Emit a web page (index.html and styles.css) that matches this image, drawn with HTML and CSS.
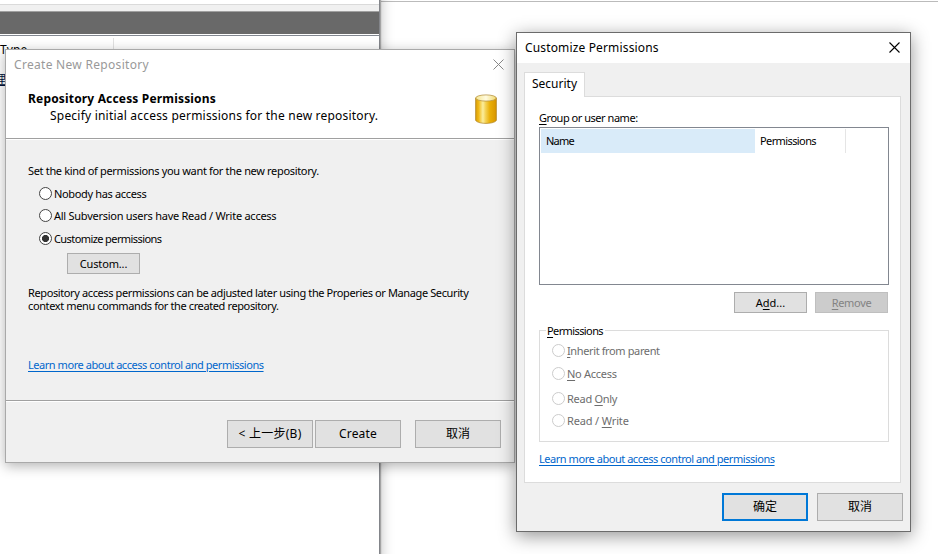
FILE: index.html
```html
<!DOCTYPE html>
<html lang="zh-CN">
<head>
<meta charset="utf-8">
<title>Customize Permissions</title>
<link rel="stylesheet" href="styles.css">
</head>
<body>
<div class="desktop">
  <div class="edge-line"></div>
  <section class="window console">
    <div class="console-bar"></div>
    <div class="console-caption"></div>
    <div class="console-head"><span class="col-type">Type</span></div>
    <div class="console-row">理</div>
  </section>

  <section class="window wizard">
    <header class="wizard-head">
      <div class="titlebar">
        <span class="title t-wizard">Create New Repository</span>
        <svg class="close" viewBox="0 0 11 11"><path d="M.5.5l10 10M10.5.5l-10 10"/></svg>
      </div>
      <div class="heading">
        <div>
          <h1>Repository Access Permissions</h1>
          <p class="sub">Specify initial access permissions for the new repository.</p>
        </div>
        <svg class="db" viewBox="0 0 22 30">
          <defs>
            <linearGradient id="side"><stop offset="0" stop-color="#d69c08"/><stop offset=".14" stop-color="#f0b816"/><stop offset=".35" stop-color="#fbee9d"/><stop offset=".48" stop-color="#f4d256"/><stop offset=".68" stop-color="#eab008"/><stop offset="1" stop-color="#d79500"/></linearGradient>
            <linearGradient id="lid"><stop offset="0" stop-color="#f7e68f"/><stop offset=".5" stop-color="#fffbe0"/><stop offset="1" stop-color="#f2d96c"/></linearGradient>
          </defs>
          <path d="M.6 4v22c0 1.8 4.6 3.4 10.4 3.4S21.400 27.800 21.400 26V4z" fill="url(#side)" stroke="#ae8120" stroke-width=".7"/>
          <ellipse cx="11" cy="4" rx="10.300" ry="3.100" fill="url(#lid)" stroke="#b99545" stroke-width=".8"/>
        </svg>
      </div>
    </header>
    <main class="wizard-body">
      <p class="lead w1">Set the kind of permissions you want for the new repository.</p>
      <div class="radio r1"><i></i><span class="w2">Nobody has access</span></div>
      <div class="radio r2"><i></i><span class="w3">All Subversion users have Read / Write access</span></div>
      <div class="radio r3 on"><i></i><span class="w4">Customize permissions</span></div>
      <button class="btn small custom"><span class="w5">Custom...</span></button>
      <p class="note">Repository access permissions can be adjusted later using the Properies or Manage Security<br>context menu commands for the created repository.</p>
      <a class="link">Learn more about access control and permissions</a>
    </main>
    <footer class="wizard-foot">
      <button class="btn"><span class="w8">&lt; 上一步(B)</span></button>
      <button class="btn"><span class="w9">Create</span></button>
      <button class="btn apart">取消</button>
    </footer>
  </section>

  <section class="window dialog">
    <div class="titlebar">
      <span class="title t-dialog">Customize Permissions</span>
      <svg class="close" viewBox="0 0 11 11"><path d="M.5.5l10 10M10.5.5l-10 10"/></svg>
    </div>
    <div class="tabs"><div class="tab"><span>Security</span></div></div>
    <div class="pane">
      <div class="label w11"><u>G</u>roup or user name:</div>
      <div class="list"><div class="list-head"><div class="c-name"><span class="w12">Name</span></div><div class="c-perm"><span class="w13">Permissions</span></div></div></div>
      <div class="actions">
        <button class="btn small"><span>A<u>d</u>d...</span></button>
        <button class="btn small off"><span class="w15"><u>R</u>emove</span></button>
      </div>
      <div class="group">
        <div class="legend"><span class="w13"><u>P</u>ermissions</span></div>
        <div class="radio g1"><i></i><span class="w17"><u>I</u>nherit from parent</span></div>
        <div class="radio g2"><i></i><span class="w18"><u>N</u>o Access</span></div>
        <div class="radio g3"><i></i><span class="w18">Read <u>O</u>nly</span></div>
        <div class="radio g4"><i></i><span class="w20">Read / <u>W</u>rite</span></div>
      </div>
      <a class="link">Learn more about access control and permissions</a>
    </div>
    <div class="dialog-foot">
      <button class="btn primary">确定</button>
      <button class="btn">取消</button>
    </div>
  </section>
</div>
</body>
</html>
```
FILE: styles.css
```css
* { box-sizing: border-box; }
body { margin: 0; background: #fff; font: 11px/13px "Noto Sans", "Noto Sans CJK SC", sans-serif; color: #000; }
h1, p { margin: 0; font-weight: normal; }
span, a, p, .label { white-space: nowrap; }
u { text-underline-offset: 2px; text-decoration-thickness: 1px; }

.desktop { position: relative; width: 938px; height: 554px; overflow: hidden; background: #fff; }
.window { position: absolute; }
.edge-line { margin-left: 381px; height: 2px; border-bottom: 1px solid #bbb; }

.console { left: 0; top: -10px; width: 380px; height: 584px; padding-top: 10px; background: #fff; border-right: 1px solid #83858a; box-shadow: 1px 0 1px rgba(0,0,0,.25), 0 0 13px rgba(0,0,0,.3); }
.console-bar { height: 11px; margin-top: 0; background: linear-gradient(#fff 4px, #dadada 4px 5px, #f0f0f0 5px); }
.console-caption { height: 23px; background: #696969; border-top: 1px solid #a0a0a0; }
.console-head { height: 27px; margin-top: 1px; border-top: 1px solid #828790; padding-top: 2px; display: flex; }
.col-type { width: 114px; border-right: 1px solid #e2e2e2; font-size: 12px; line-height: 23px; letter-spacing: .2px; }
.console-row { margin: 11px 0 0 -6px; height: 16px; font-size: 12px; line-height: 13px; color: #00133a; text-decoration: underline; }

.wizard { left: 5px; top: 49px; width: 510px; height: 414px; border: 1px solid #a9a9a9; background: #f0f0f0; display: flex; flex-direction: column; box-shadow: 0 3px 12px rgba(0,0,0,.3); }
.wizard-head { height: 89px; background: #fff; border-bottom: 1px solid #a0a0a0; box-shadow: 0 1px #fff; }
.titlebar { display: flex; justify-content: space-between; align-items: center; height: 30px; padding: 0 10px 0 8px; }
.title { font-size: 12px; line-height: 16px; }
.wizard .title { color: #999; }
.close { width: 11px; height: 11px; margin-top: -2px; fill: none; stroke: #000; stroke-width: 1.1; }
.wizard .close { stroke: #888; stroke-width: 1; }
.heading { display: flex; justify-content: space-between; padding: 10px 17px 0 22px; }
.heading h1 { font-size: 12px; line-height: 17px; font-weight: bold; }
.sub { font-size: 12px; line-height: 17px; margin-left: 22px; }
.db { width: 22px; height: 30px; margin-top: 4px; }
.wizard-body { height: 262px; padding: 25px 22px 0; border-bottom: 1px solid #a0a0a0; box-shadow: 0 1px #fff; }
.wizard-foot { display: flex; justify-content: flex-end; gap: 2px; padding: 19px 13px 0; }
.apart { margin-left: 12px; }

.radio { display: flex; align-items: center; gap: 2px; height: 14px; margin-left: 11px; }
.radio i { width: 13px; height: 13px; border: 1px solid #444; border-radius: 50%; background: #fff; }
.radio.on i { background: radial-gradient(circle, #333 3.2px, #fff 3.9px); }
.r1 { margin-top: 9px; } .r2 { margin-top: 8px; } .r3 { margin-top: 9px; }

.btn { display: flex; align-items: center; justify-content: center; width: 86px; height: 28px; padding: 0; border: 1px solid #adadad; background: #e1e1e1; color: #000; font: 12px/16px "Noto Sans", "Noto Sans CJK SC", sans-serif; }
.btn.small { width: 73px; height: 21px; font-size: 11px; line-height: 13px; }
.btn.off { background: #ccc; border-color: #bfbfbf; color: #838383; }
.btn.primary { border: 2px solid #0078d7; }
.custom { margin: 8px 0 0 39px; }
.note { margin-top: 12px; letter-spacing: -.385px; }
.link { display: block; color: #0066cc; letter-spacing: -.455px; text-decoration: underline; text-underline-offset: 2px; text-decoration-thickness: 1px; }
.wizard .link { margin-top: 46px; }

.dialog { left: 516px; top: 32px; width: 395px; height: 500px; border: 1px solid #6b6b6b; background: #f0f0f0; box-shadow: 0 4px 17px rgba(0,0,0,.42); }
.dialog .titlebar { background: #fff; }
.tabs { padding: 9px 0 0 7px; height: 33px; display: flex; }
.tab { position: relative; width: 61px; height: 25px; border: 1px solid #dcdcdc; border-bottom: 0; background: #fff; padding-left: 7px; font-size: 12px; line-height: 22px; }
.pane { width: 377px; height: 387px; margin-left: 7px; border: 1px solid #dcdcdc; background: #fff; padding: 14px 11px 0 14px; }
.list { height: 158px; margin-top: 3px; border: 1px solid #828790; padding: 1px; }
.list-head { display: flex; height: 24px; line-height: 24px; }
.c-name { width: 214px; background: #d9ebf9; padding-left: 5px; }
.c-perm { width: 91px; border-right: 1px solid #e5e5e5; padding-left: 5px; }
.actions { display: flex; justify-content: flex-end; gap: 8px; margin: 7px 1px 0 0; }
.group { height: 112px; margin-top: 17px; border: 1px solid #dcdcdc; }
.legend { width: 59px; height: 13px; margin: -7px 0 0 6px; padding-left: 1px; background: #fff; }
.group .radio { margin-left: 12px; color: #6d6d6d; }
.group .radio i { border-color: #ccc; }
.g1 { margin-top: 6px; } .g2 { margin-top: 9px; } .g3 { margin-top: 11px; } .g4 { margin-top: 8px; }
.pane .link { margin-top: 10px; }
.dialog-foot { display: flex; justify-content: flex-end; gap: 9px; padding: 10px 7px 0; }

/* Per-label tracking */
.t-wizard { letter-spacing: .3px; }
.t-dialog { letter-spacing: .15px; }
.heading h1 { letter-spacing: .17px; }
.sub { letter-spacing: .21px; }
.w1 { letter-spacing: -.33px; }
.w2 { letter-spacing: -.34px; }
.w3 { letter-spacing: -.26px; }
.w4 { letter-spacing: -.59px; }
.w5 { letter-spacing: -.15px; }
.w8 { letter-spacing: .25px; }
.w9 { letter-spacing: .15px; }
.w11 { letter-spacing: -.47px; }
.w12 { letter-spacing: -.8px; }
.w13 { letter-spacing: -.6px; }
.w15 { letter-spacing: -.35px; }
.w17 { letter-spacing: -.38px; }
.w18 { letter-spacing: -.28px; }
.w20 { letter-spacing: -.15px; }
```
